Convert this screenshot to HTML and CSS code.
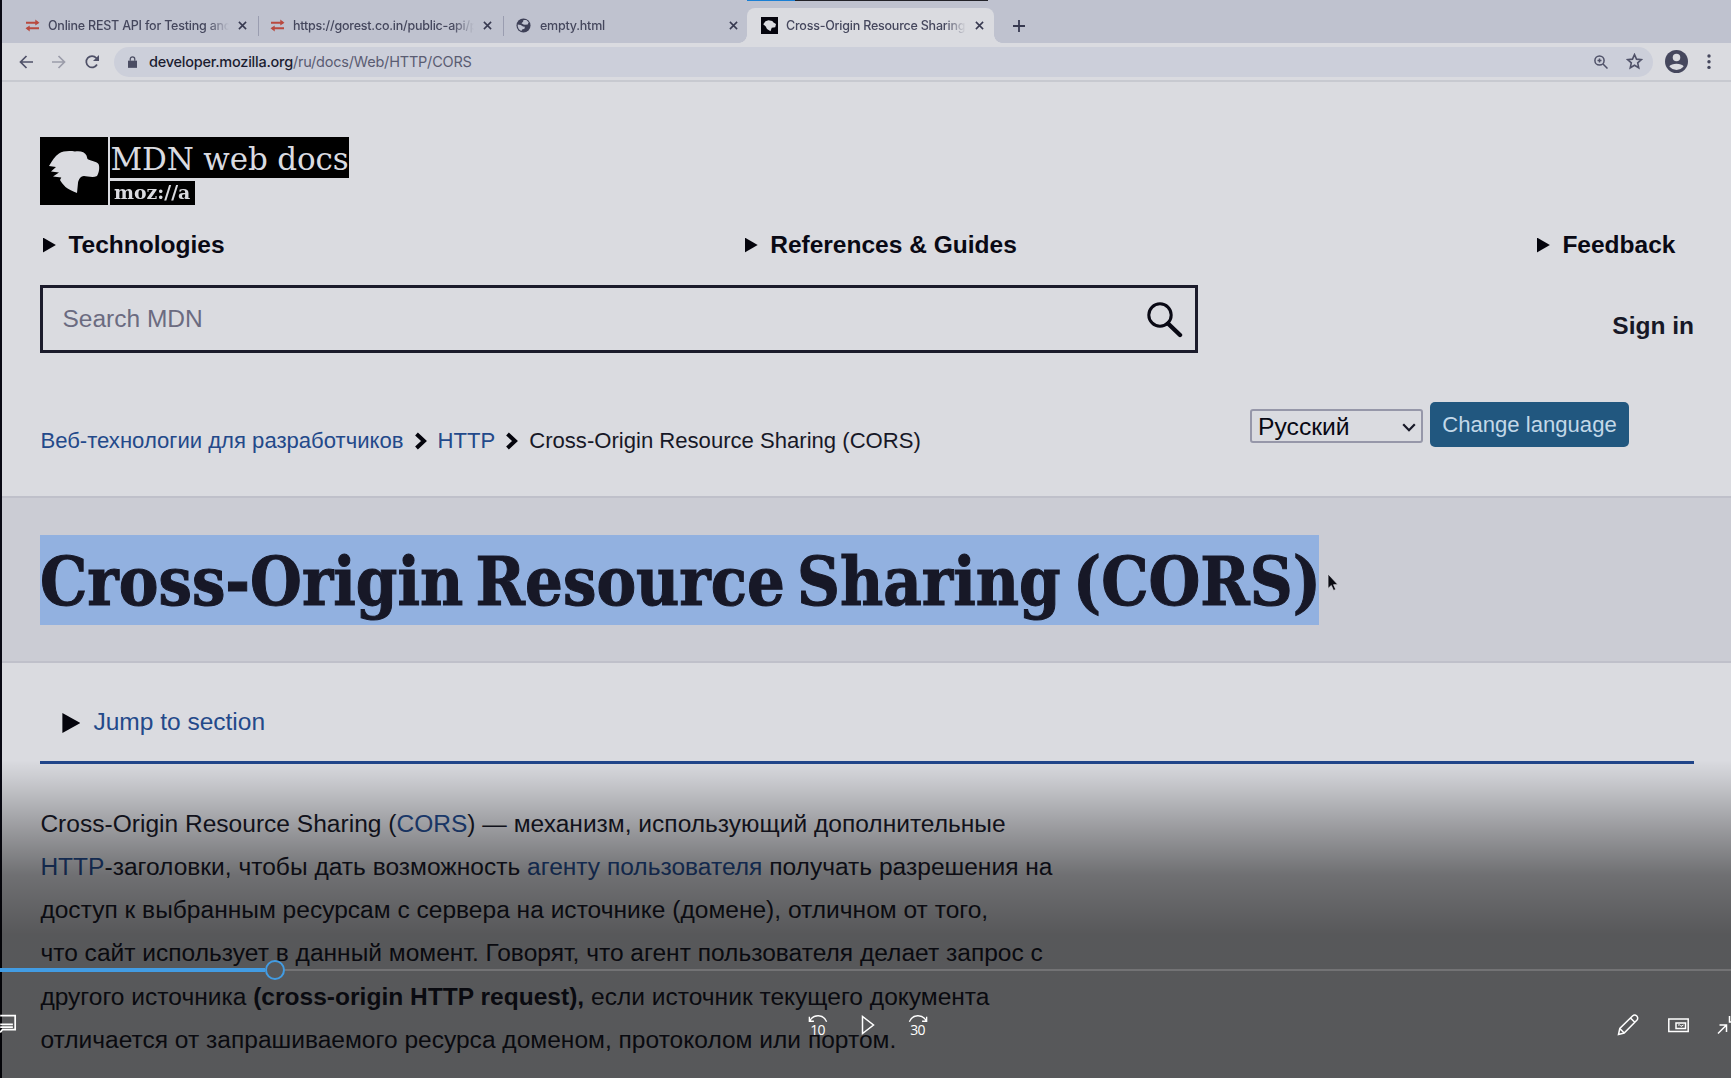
FILE: index.html
```html
<!DOCTYPE html>
<html lang="ru">
<head>
<meta charset="utf-8">
<title>Cross-Origin Resource Sharing (CORS)</title>
<link rel="stylesheet" href="styles.css">
</head>
<body>
<div class="screen">
  <div class="browser">
    <div class="tabs">
      <div class="tab tab-api">
        <svg class="fav" viewBox="0 0 16 14"><path d="M1 4h13M2 10h13" stroke="#b9493f" stroke-width="2.2"/><path d="M11 .5L15.5 4 11 7zM5 7L.5 10 5 13.500z" fill="#b9493f"/></svg>
        <span class="tab-title">Online REST API for Testing and</span>
        <svg class="close" viewBox="0 0 10 10"><path d="M1 1l8 8M9 1L1 9"/></svg>
      </div>
      <div class="tab tab-json">
        <svg class="fav" viewBox="0 0 16 14"><path d="M1 4h13M2 10h13" stroke="#b9493f" stroke-width="2.2"/><path d="M11 .5L15.5 4 11 7zM5 7L.5 10 5 13.500z" fill="#b9493f"/></svg>
        <span class="tab-title">https://gorest.co.in/public-api/p</span>
        <svg class="close" viewBox="0 0 10 10"><path d="M1 1l8 8M9 1L1 9"/></svg>
      </div>
      <div class="tab tab-empty">
        <svg class="fav globe" viewBox="0 0 16 16"><circle cx="8" cy="8" r="7.500" fill="#3e4057"/><path d="M1.800 7L5 7.500 7.500 9l2 .3-.5 2.200-2.500.8-.7 1.500C3 12.800 1.500 10 1.800 7zM8 2.200l3-.2 2.500 2.500-1 2.500-3 .3L8 6.800 5.800 5.600 7.500 4z" fill="#c0c3d1"/></svg>
        <span class="tab-title">empty.html</span>
        <svg class="close" viewBox="0 0 10 10"><path d="M1 1l8 8M9 1L1 9"/></svg>
      </div>
      <div class="tab active">
        <svg class="fav mdn" viewBox="0 0 68 68"><path d="M0 0h68v68H0z" fill="#04040d"/><path fill="#dadbe0" d="M9 29 18 17 30 13 45 16 50 22 60 28 57 41 43 43 38 57 24 48 19 38z"/></svg>
        <span class="tab-title">Cross-Origin Resource Sharing</span>
        <svg class="close" viewBox="0 0 10 10"><path d="M1 1l8 8M9 1L1 9"/></svg>
      </div>
      <svg class="plus" viewBox="0 0 12 12"><path d="M6 0v12M0 6h12"/></svg>
    </div>
    <div class="toolbar">
      <svg class="tool back" viewBox="0 0 14 14"><path d="M14 7H1.500M7.500 1l-6 6 6 6"/></svg>
      <svg class="tool forward" viewBox="0 0 14 14"><path d="M0 7h12.500M6.500 1l6 6-6 6"/></svg>
      <svg class="tool reload" viewBox="0 0 14 14"><path d="M12 9.500A5.700 5.700 0 1 1 11.300 3L13 5"/><path d="M14 0v6H8z" fill="#4f5168" stroke="none"/></svg>
      <div class="omnibox">
        <svg class="lock" viewBox="0 0 10 13"><path d="M0 5h10v8H0z" fill="#4b4d63"/><path d="M2.500 5V3.200a2.500 2.500 0 0 1 5 0V5" fill="none" stroke="#4b4d63" stroke-width="1.400"/></svg>
        <span class="url"><b>developer.mozilla.org</b>/ru/docs/Web/HTTP/CORS</span>
        <svg class="magnify" viewBox="0 0 14 14"><circle cx="5.500" cy="5.500" r="4.600"/><path d="M9 9l4.500 4.500M5.500 3.500v4M3.500 5.500h4"/></svg>
        <svg class="star" viewBox="0 0 16 16"><path d="M8 1.500l1.900 4.300 4.600.4-3.500 3.100 1 4.600L8 11.500l-4 2.400 1-4.600L1.500 6.200l4.600-.4z"/></svg>
      </div>
      <svg class="avatar" viewBox="0 0 24 24"><circle cx="12" cy="12" r="12" fill="#45475d"/><circle cx="12" cy="7.800" r="3.900" fill="#dadbe0"/><path d="M4.500 17c2-3.500 13-3.500 15 0-3.500 5-11.500 5-15 0z" fill="#dadbe0"/></svg>
      <svg class="dots" viewBox="0 0 4 16"><circle cx="2" cy="2" r="1.700"/><circle cx="2" cy="7.700" r="1.700"/><circle cx="2" cy="13.400" r="1.700"/></svg>
    </div>
  </div>

  <header class="site-header">
    <div class="logo">
      <svg class="dino" viewBox="0 0 68 68"><path fill="#dadbe0" d="M9 29C12 24 15 19 19 16.500 23 14 29 13.500 35 14.500 40 13.500 45 15 46.500 18.500L47.500 22C51 24 56 24 58.500 27 60 30 59 36 57 39 53 41 47 39 44 39 40 39 38.500 43 38 46L37 56C32 54 28 52 25.500 50 23 47 21 45 20 43L21.300 40.500 13 39.500 19 35.500 11 34.500 16 30z"/></svg>
      <div class="wordmarks">
        <div class="wordmark">MDN web docs</div>
        <div class="mozilla"><span>moz://a</span></div>
      </div>
    </div>
    <nav class="main-nav">
      <span class="nav-item"><i class="tri"></i>Technologies</span>
      <span class="nav-item"><i class="tri"></i>References &amp; Guides</span>
      <span class="nav-item"><i class="tri"></i>Feedback</span>
    </nav>
    <div class="search-row">
      <div class="search"><span>Search MDN</span>
        <svg class="glass" viewBox="0 0 36 36"><circle cx="13" cy="13" r="11.200" fill="none" stroke="#090914" stroke-width="3"/><path d="M21 21.500L33 33" stroke="#090914" stroke-width="4.400" stroke-linecap="round"/></svg>
      </div>
      <span class="sign-in">Sign in</span>
    </div>
    <div class="crumb-row">
      <div class="crumbs">
        <a>Веб-технологии для разработчиков</a>
        <svg class="chev" viewBox="0 0 13 18"><path d="M2.500 2L10 9l-7.500 7"/></svg>
        <a>HTTP</a>
        <svg class="chev" viewBox="0 0 13 18"><path d="M2.500 2L10 9l-7.500 7"/></svg>
        <span>Cross-Origin Resource Sharing (CORS)</span>
      </div>
      <div class="language">
        <div class="select">Русский<svg viewBox="0 0 14 9"><path d="M1.200 1.200L7 7.200l5.800-6"/></svg></div>
        <div class="button">Change language</div>
      </div>
    </div>
  </header>

  <div class="title-band">
    <h1><span>Cross-Origin Resource Sharing (CORS)</span></h1>
    <svg class="cursor" viewBox="0 0 12 20"><path d="M1 1v14.500l3.300-3 2.200 5 2.300-1-2.200-4.800H11z" fill="#0a0a12" stroke="#d5d5dc" stroke-width=".8"/></svg>
  </div>

  <main class="content">
    <div class="jump"><i class="tri big"></i><a>Jump to section</a></div>
    <p>Cross-Origin Resource Sharing (<a>CORS</a>) — механизм, использующий дополнительные<br><a>HTTP</a>-заголовки, чтобы дать возможность <a>агенту пользователя</a> получать разрешения на<br>доступ к выбранным ресурсам с сервера на источнике (домене), отличном от того,<br>что сайт использует в данный момент. Говорят, что агент пользователя делает запрос с<br>другого источника <b>(cross-origin HTTP request),</b> если источник текущего документа<br>отличается от запрашиваемого ресурса доменом, протоколом или портом.</p>
  </main>

  <div class="top-strip"></div>
  <div class="player">
    <div class="seek"><div class="played"></div><div class="knob"></div><div class="rest"></div></div>
    <div class="controls">
      <svg class="captions" viewBox="0 0 17 20"><path d="M0 1.500h13v12H2L0 16M0 9h11M0 11.500h11" /></svg>
      <div class="transport">
        <div class="skip"><svg viewBox="0 0 22 9"><path d="M1.500 2.500v5h5M2 7C6-.5 17-.5 20.500 8"/></svg><span>10</span></div>
        <svg class="play" viewBox="0 0 14 20"><path d="M1.500 1.500v17L12.500 10z"/></svg>
        <div class="skip"><svg viewBox="0 0 22 9"><path d="M20.500 2.500v5h-5M20 7C16-.5 5-.5 1.500 8"/></svg><span>30</span></div>
      </div>
      <div class="tools">
        <svg class="pencil" viewBox="0 0 22 22"><path d="M1.500 20.500l1.300-6L15.500 2a2.900 2.900 0 0 1 4.300 4.300L7.200 19zM2.800 14.500L7.200 19M13.500 4l4.300 4.300"/></svg>
        <svg class="pip" viewBox="0 0 21 15"><path d="M.8 1h19.400v12.500H.8z"/><path d="M8 5h9.500v5.500H8z"/><path d="M10 7.200l1.500-.5 1.500 1.700 2.500-1.400" stroke-width="1"/></svg>
        <svg class="shrink" viewBox="0 0 14 20"><path d="M1 18.500l8-8M2.500 10h7v7M12.500 1v6H14"/></svg>
      </div>
    </div>
  </div>
</div>
</body>
</html>
```
FILE: styles.css
```css
* { box-sizing: border-box; }
body { margin: 0; background: #dadbe0; font-family: "Liberation Sans", Arial, sans-serif; font-size: 24.530px; color: #171827; }
svg { display: block; flex: none; }
a { color: #23498a; }
.screen { position: relative; width: 1731px; height: 1078px; overflow: hidden; padding-left: 2px; background: linear-gradient(90deg, #090914 2px, #dadbe0 2px); }

.browser { font-family: Inter, Roboto, sans-serif; font-size: 12.500px; color: #45475d; }
.tabs { height: 43px; padding-top: 8px; background: #bfc2cf; display: flex; }
.tab { display: flex; align-items: center; height: 35px; position: relative; }
.tab-api { width: 257px; padding-left: 23px; }
.tab-json { width: 245px; padding-left: 11px; }
.tab-empty { width: 243px; padding-left: 12px; }
.tab-api::after, .tab-json::after { content: ""; position: absolute; right: 0; top: 8px; width: 1.500px; height: 20px; background: #9a9db0; }
.active { width: 247px; padding-left: 14px; background: #dadbe0; border-radius: 8px 8px 0 0; }
.active::before, .active::after { content: ""; position: absolute; bottom: 0; width: 8px; height: 8px; }
.active::before { left: -8px; background: radial-gradient(circle at 0 0, transparent 7.500px, #dadbe0 8px); }
.active::after { right: -8px; background: radial-gradient(circle at 100% 0, transparent 7.500px, #dadbe0 8px); }
.fav { width: 15px; height: 13px; margin-right: 8px; }
.globe { width: 15px; height: 15px; margin-right: 9px; }
.mdn { width: 17px; height: 17px; margin-right: 8px; }
.tab-title { width: 181px; overflow: hidden; white-space: nowrap; mask-image: linear-gradient(90deg, #000 88%, transparent); line-height: 20px; font-weight: 500; letter-spacing: -.22px; }
.close { width: 9px; height: 9px; margin-left: 9px; stroke: #373950; stroke-width: 1.700; fill: none; }
.tab-empty .tab-title { width: 180px; }
.active .tab-title { width: 180px; }
.plus { width: 12px; height: 12px; margin: 12px 0 0 19px; stroke: #373950; stroke-width: 1.800; }
.toolbar { height: 39px; display: flex; align-items: center; padding-left: 17px; border-bottom: 2px solid #c7c9d0; }
.tool { width: 14px; height: 14px; fill: none; stroke: #4f5168; stroke-width: 1.700; }
.forward { margin-left: 19px; opacity: .45; }
.reload { margin-left: 19px; }
.omnibox { width: 1539px; height: 30px; margin-left: 15px; border-radius: 15px; background: #cccfda; display: flex; align-items: center; padding-left: 14px; }
.lock { width: 9px; height: 12px; }
.url { margin-left: 12px; flex: 1; font-size: 14.500px; letter-spacing: -.2px; color: #5a5c72; }
.url b { font-weight: 500; color: #1b1c30; letter-spacing: -.24px; }
.magnify { width: 14px; height: 14px; fill: none; stroke: #4f5168; stroke-width: 1.500; margin-right: 18px; }
.star { width: 17px; height: 17px; fill: none; stroke: #4f5168; stroke-width: 1.500; margin-right: 10px; }
.avatar { width: 23px; height: 23px; margin-left: 12px; }
.dots { width: 4px; height: 16px; margin-left: 19px; fill: #45475d; }

.site-header { padding: 55px 37px 0 38.400px; height: 414px; }
.logo { display: flex; gap: 2px; height: 68px; }
.dino { width: 68px; height: 68px; background: #000; }
.wordmarks { display: flex; flex-direction: column; gap: 3px; align-items: flex-start; color: #dadbe0; font-family: "DejaVu Serif", serif; }
.wordmark { width: 239px; height: 41px; background: #000; line-height: 45px; font-size: 31px; letter-spacing: -.15px; white-space: nowrap; }
.mozilla { width: 85px; height: 24px; background: #000; line-height: 24px; font-size: 18px; font-weight: 700; padding-left: 4px; }
.mozilla span { display: inline-block; transform-origin: 0 50%; transform: scaleX(1.05); }
.main-nav { display: flex; justify-content: space-between; margin-top: 20px; line-height: 40px; padding: 0 18.500px 0 2.500px; font-weight: 700; color: #090914; }
.nav-item { display: flex; align-items: center; }
.tri { width: 13px; height: 15px; margin-right: 12.500px; background: #04040c; clip-path: polygon(0 0, 100% 50%, 0 100%); }
.search-row { display: flex; justify-content: space-between; align-items: center; margin-top: 20px; height: 68px; }
.search { width: 1158px; height: 68px; border: 3px solid #1b1b2b; display: flex; justify-content: space-between; align-items: center; padding: 0 12px 0 19px; color: #6b6b80; }
.glass { width: 36px; height: 36px; margin-top: 2px; }
.sign-in { font-weight: 700; padding-top: 13px; }
.crumb-row { display: flex; justify-content: space-between; margin-top: 49px; height: 45px; }
.crumbs { display: flex; align-items: center; font-size: 22.100px; padding-top: 33px; white-space: nowrap; }
.chev { width: 13px; height: 18px; margin: 0 11px 0 10px; fill: none; stroke: #04040c; stroke-width: 4; }
.language { display: flex; gap: 7px; align-items: center; margin-right: 65px; }
.select { width: 173px; height: 34px; margin-top: 3px; border: 2px solid #9697a9; border-radius: 3px; display: flex; align-items: center; justify-content: space-between; padding: 2px 5px 0 6px; color: #090914; font-size: 24.700px; }
.select svg { width: 14px; height: 9px; fill: none; stroke: #171827; stroke-width: 2.200; }
.button { width: 199px; height: 45px; border-radius: 5px; background: #21577f; color: #c3d8e8; font-size: 22.100px; line-height: 46px; text-align: center; }

.title-band { height: 167px; border: solid #bfc0ca; border-width: 2px 0; background: #cbccd4; padding-left: 38.400px; display: flex; align-items: center; }
h1 { margin: 0; width: 1279px; height: 90px; background: #92b1e0; font-family: "DejaVu Serif", serif; font-stretch: condensed; font-size: 67px; line-height: 94px; white-space: nowrap; }
h1 span { display: inline-block; transform-origin: 0 50%; transform: scaleX(.987); word-spacing: -8.500px; -webkit-text-stroke: 1px #171827; }
.cursor { width: 12px; height: 20px; margin: 6px 0 0 8px; }

.content { padding: 38px 37px 0 38.400px; }
.jump { display: flex; align-items: center; height: 63px; padding: 0 0 19px 22px; border-bottom: 3px solid #20458a; }
.tri.big { width: 18px; height: 20px; margin: 3px 13px 0 0; }
p { margin: 37.500px 0 0; line-height: 43.300px; letter-spacing: .015px; white-space: nowrap; }

.top-strip { position: absolute; left: 747px; top: 0; width: 241px; height: 1px; background: linear-gradient(90deg, #1a7fd4 48px, #222228 48px); }
.player { position: absolute; left: 0; right: 0; top: 750px; bottom: 0; padding-top: 210px; background: linear-gradient(180deg, rgba(0,0,0,0) 10px, rgba(0,0,0,.08) 30px, rgba(0,0,0,.3) 80px, rgba(0,0,0,.49) 125px, rgba(0,0,0,.6) 185px); }
.seek { display: flex; align-items: center; height: 20px; }
.played { width: 265px; height: 4px; background: #429ce3; }
.knob { width: 20px; height: 20px; border: 2px solid #429ce3; border-radius: 50%; }
.rest { flex: 1; height: 2px; background: #737375; }
.controls { display: grid; grid-template-columns: 1fr auto 1fr; align-items: center; height: 90px; fill: none; stroke: #fff; stroke-width: 1.500; color: #fff; }
.captions { width: 20px; height: 23px; }
.transport { display: flex; align-items: center; gap: 33px; margin-left: 4px; }
.skip { width: 20px; font: 14px/14px "Open Sans", sans-serif; text-align: center; letter-spacing: -.7px; }
.skip svg { width: 20px; height: 9px; }
.play { width: 14px; height: 20px; }
.tools { display: flex; align-items: center; justify-content: flex-end; }
.pencil { width: 22px; height: 22px; margin-right: 29px; }
.pip { width: 21px; height: 15px; margin-right: 28px; }
.shrink { width: 14px; height: 20px; }
```
